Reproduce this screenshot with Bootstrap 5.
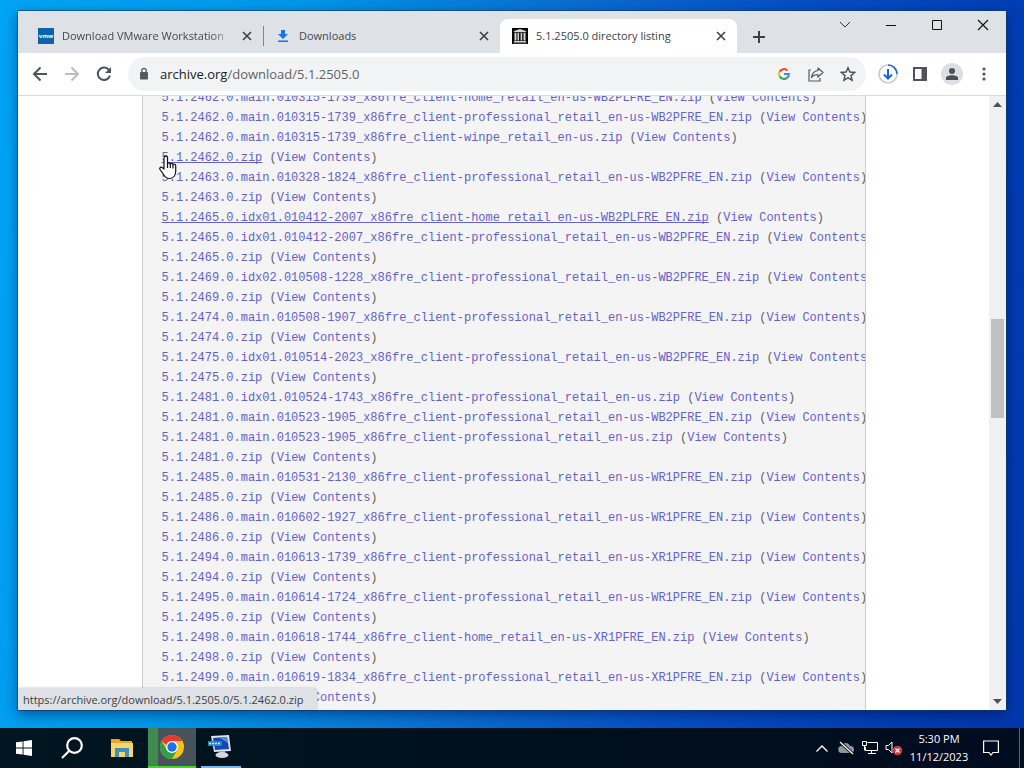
<!DOCTYPE html>
<html lang="en">
<head>
<meta charset="utf-8">
<meta name="viewport" content="width=device-width, initial-scale=1">
<title>5.1.2505.0 directory listing</title>
<link href="https://cdn.jsdelivr.net/npm/bootstrap@5.3.0/dist/css/bootstrap.min.css" rel="stylesheet">
<style>
  body { font-family: "Open Sans", "Noto Sans", sans-serif; font-size: 11px; line-height: 16px; color: #3c4043;
    background: linear-gradient(100deg, #00a4f6 0%, #0098ea 25%, #0a70d2 48%, #0650c4 68%, #003cb2 90%, #0038ac 100%); }
  button { border: 0; background: none; padding: 0; color: inherit; display: flex; align-items: center; justify-content: center; flex: none; }
  svg { display: block; flex: none; }
  .browser { min-height: 0; margin: 11px 18px 18px; background: #fff; box-shadow: 0 0 0 1px rgba(20,60,100,.6), 0 4px 12px rgba(0,10,60,.5); }
  .tabstrip { height: 42px; background: #dee1e6; padding: 8px 0 0 8px; }
  .tab { width: 237px; height: 34px; padding: 0 11px 0 12px; min-width: 0; }
  .tab-split { border-right: 1px solid #80868b; height: 20px; margin-right: -1px; }
  .tab.active { background: #fff; border-radius: 8px 8px 0 0; }
  .tab-title { color: #45494d; white-space: nowrap; overflow: hidden; flex: 1 1 0; margin: 0 10px 0 8px; text-decoration: none; }
  .tab.active .tab-title { color: #3c4043; }
  .fade-end { -webkit-mask-image: linear-gradient(90deg, #000 88%, transparent); mask-image: linear-gradient(90deg, #000 88%, transparent); }
  .round-btn { width: 32px; height: 32px; }
  .win-btn { width: 46px; height: 28px; color: #111; margin-top: -8px; }
  .toolbar { height: 43px; border-bottom: 1px solid #d8dadd; padding: 0 6px; }
  .omnibox { height: 34px; background: #f1f3f4; border-radius: 17px; color: #5f6368; padding: 0 2px 0 8px; margin: 0 6px 0 8px; }
  .address { font-size: 13px; line-height: 20px; color: #5f6368; text-decoration: none; }
  .address b { font-weight: 400; color: #202124; }
  .viewport { min-height: 0; }
  .page { max-width: 724px; background: #f4f4f4; border: solid #ccc; border-width: 0 1px; padding-left: 19px; overflow: hidden; }
  .listing { font: 12px/20px "Liberation Mono", monospace; color: #606060; margin: -8px 0 0; overflow: visible; }
  .listing a { color: #6462c8; text-decoration: none; }
  .listing a:hover, .listing a.lit { text-decoration: underline; text-decoration-skip-ink: none; }
  .scroller { width: 17px; background: #f0f0f0; padding: 6px 2px; color: #505050; }
  .thumb { background: #bfc1c1; flex: 0 0 99px; }
  .status { left: 0; bottom: 0; height: 22px; background: #dee1e6; border-radius: 0 4px 0 0; padding: 4px 14px 2px 5px; color: #3c4043; box-shadow: 0 0 2px rgba(0,0,0,.3); white-space: nowrap; }
  .pointer { left: 141px; top: 59px; }
  .taskbar { height: 40px; background: linear-gradient(90deg, #001621, #000f1c 60%, #000c20); color: #fff; }
  .task { width: 48px; height: 40px; }
  .task.folder { margin: 0 2px; }
  .task.running { border-bottom: 2px solid #49d22d; background: linear-gradient(90deg, #3f8a4c 10px, #46535b 10px); margin-right: 5px; }
  .task.idle { width: 40px; border-bottom: 2px solid #76b9ed; padding-right: 2px; }
  .tray button { width: 24px; height: 40px; }
  .clock { line-height: 18px; width: 66px; margin-right: 7px; }
  .tray .peek { width: 5px; border-left: 1px solid #59636d; margin-left: 16px; }
</style>
</head>
<body class="vh-100 d-flex flex-column overflow-hidden">
<main class="browser flex-grow-1 d-flex flex-column">
  <header class="tabstrip d-flex">
    <div class="tab d-flex align-items-center">
      <svg width="16" height="16"><path fill="#0e63a8" d="M0 0h16v16H0z"/><text x="8" y="10" font-size="6" font-weight="700" font-family="Open Sans" fill="#fff" text-anchor="middle">vmw</text></svg>
      <a class="tab-title fade-end" href="#">Download VMware Workstation</a>
      <button aria-label="Close tab"><svg width="10" height="10" stroke="#3c4043" stroke-width="1.6"><path d="M1 1l8 8M9 1l-8 8"/></svg></button>
    </div>
    <span class="tab-split align-self-center"></span>
    <div class="tab d-flex align-items-center">
      <svg width="16" height="16" fill="#1a73e8"><path d="M6 2h4v4h3L8 11 3 6h3zM3 12.500h10V14H3z"/></svg>
      <a class="tab-title" href="#">Downloads</a>
      <button aria-label="Close tab"><svg width="10" height="10" stroke="#3c4043" stroke-width="1.600"><path d="M1 1l8 8M9 1l-8 8"/></svg></button>
    </div>
    <div class="tab active d-flex align-items-center">
      <svg width="16" height="16"><path d="M0 0h16v16H0z"/><g fill="#d5d5d5"><path d="M8 1l6 2v1.200H2V3zM2 13h12v1H2zM1.500 14.500h13v.8h-13zM2.500 5h2v7.500h-2zM5.500 5h1.600v7.500H5.500zM8.600 5h1.600v7.500H8.600zM11.500 5h2v7.500h-2z"/></g></svg>
      <a class="tab-title" href="#">5.1.2505.0 directory listing</a>
      <button aria-label="Close tab"><svg width="10" height="10" stroke="#3c4043" stroke-width="1.600"><path d="M1 1l8 8M9 1l-8 8"/></svg></button>
    </div>
    <button class="ms-3 mb-auto mt-2" aria-label="New tab"><svg class="mt-1" width="12" height="12" stroke="#3c4043" stroke-width="2"><path d="M6 0v12M0 6h12"/></svg></button>
    <div class="d-flex ms-auto">
      <button class="win-btn" aria-label="Search tabs"><svg width="12" height="8" fill="none" stroke="#333"><path d="M1 1l5 5 5-5"/></svg></button>
      <button class="win-btn" aria-label="Minimize"><svg width="10" height="10" stroke="#111"><path d="M0 5.500h10"/></svg></button>
      <button class="win-btn" aria-label="Maximize"><svg width="10" height="10" fill="none" stroke="#111"><path d="M.5.5h9v9h-9z"/></svg></button>
      <button class="win-btn" aria-label="Close"><svg width="12" height="12" stroke="#111" stroke-width="1.200"><path d="M1 1l10 10M11 1L1 11"/></svg></button>
    </div>
  </header>
  <nav class="toolbar d-flex align-items-center">
    <button class="round-btn" aria-label="Back"><svg width="16" height="16" fill="none" stroke="#50545a" stroke-width="2"><path d="M15 8H2M8.500 1.500L2 8l6.500 6.500"/></svg></button>
    <button class="round-btn" aria-label="Forward"><svg width="16" height="16" fill="none" stroke="#babcbe" stroke-width="2"><path d="M1 8h13M7.500 1.500L14 8l-6.500 6.500"/></svg></button>
    <button class="round-btn" aria-label="Reload"><svg width="16" height="16" fill="none" stroke="#50545a" stroke-width="2"><path d="M13.300 4.500A6.200 6.200 0 1 0 14 9.500"/><path d="M15 1v6H9z" fill="#50545a" stroke="none"/></svg></button>
    <div class="omnibox d-flex align-items-center flex-grow-1">
      <button aria-label="Site information"><svg width="16" height="16" fill="#55595e"><path d="M5 6h6a1 1 0 0 1 1 1v5.500a1 1 0 0 1-1 1H5a1 1 0 0 1-1-1V7a1 1 0 0 1 1-1z"/><path d="M5.800 6V4.500a2.200 2.200 0 0 1 4.400 0V6" fill="none" stroke="#55595e" stroke-width="1.300"/></svg></button>
      <a class="address flex-grow-1 ms-2" href="#"><b>archive.org</b>/download/5.1.2505.0</a>
      <button class="round-btn" aria-label="Search with Google"><svg width="12" height="12" viewBox="0 0 12 12" fill="none" stroke-width="2"><path stroke="#ea4335" d="M1.600 3.800A4.900 4.900 0 0 1 9.500 2.600"/><path stroke="#fbbc05" d="M1.600 8.200a4.900 4.900 0 0 1 0-4.400"/><path stroke="#34a853" d="M1.600 8.200a4.900 4.900 0 0 0 7.400 1.700"/><path stroke="#4285f4" d="M9 9.900A4.900 4.900 0 0 0 10.900 6H6"/></svg></button>
      <button class="round-btn" aria-label="Share"><svg width="16" height="16" fill="none" stroke="#55595e" stroke-width="1.200" stroke-linejoin="round"><path d="M3 4H1v11h11v-3"/><path d="M10 2l5 4.500-5 4.500V8.500C7 8.500 5 9.500 3.500 11.500 4 7.500 6 5 10 4.500z"/></svg></button>
      <button class="round-btn" aria-label="Bookmark"><svg width="16" height="16" fill="none" stroke="#50545a" stroke-width="1.500"><path d="M8 1.800l1.900 4.300 4.700.4L11 9.600l1.100 4.600L8 11.800l-4.100 2.400L5 9.600 1.400 6.500l4.700-.4z"/></svg></button>
    </div>
    <button class="round-btn" aria-label="Download progress"><svg width="20" height="20" fill="none" stroke-width="1.600"><circle cx="10" cy="10" r="9" stroke="#c7cbd0"/><path stroke="#1a66d8" d="M10 1a9 9 0 0 1 9 9"/><path stroke="#1a66d8" stroke-width="2" d="M10 5v9M6 10.500l4 4 4-4"/></svg></button>
    <button class="round-btn" aria-label="Side panel"><svg width="14" height="14"><path d="M1 1h12v12H1z" fill="none" stroke="#50545a" stroke-width="2"/><path d="M8.500 1H13v12H8.500z" fill="#50545a"/></svg></button>
    <button class="round-btn" aria-label="Profile"><svg width="22" height="22"><circle cx="11" cy="11" r="11" fill="#dcdfe5"/><circle cx="11" cy="8" r="3" fill="#4c5056"/><path fill="#4c5056" d="M5 17v-2c0-3.600 12-3.600 12 0v2z"/></svg></button>
    <button class="round-btn" aria-label="Menu"><svg width="4" height="14" fill="#50545a"><circle cx="2" cy="2" r="1.600"/><circle cx="2" cy="7" r="1.600"/><circle cx="2" cy="12" r="1.600"/></svg></button>
  </nav>
  <section class="viewport flex-grow-1 d-flex position-relative">
    <div class="flex-grow-1 d-flex justify-content-center overflow-hidden">
      <div class="page w-100"><pre class="listing" id="listing"></pre></div>
    </div>
    <div class="scroller d-flex flex-column align-items-center">
      <svg width="9" height="5" fill="#505050"><path d="M4.500 0L9 5H0z"/></svg>
      <div style="flex:212 1 0"></div>
      <div class="thumb w-100"></div>
      <div style="flex:281 1 0"></div>
      <svg width="9" height="5" fill="#505050"><path d="M0 0h9L4.500 5z"/></svg>
    </div>
    <div class="status position-absolute">https://archive.org/download/5.1.2505.0/5.1.2462.0.zip</div>
    <svg class="pointer position-absolute" width="18" height="25" viewBox="0 0 18 25" fill="#fff" stroke="#111" stroke-width="1.200" stroke-linejoin="round"><path d="M5 14V3c0-2.400 3.500-2.400 3.500 0v6c0-1.500 2.800-1.500 2.800.4 0-1.500 2.700-1.300 2.700.6 0-1.400 2.700-1.200 2.700.8V16c0 4-2 7.500-6 7.500-3.500 0-5-1.500-6.500-4.500L1 14.500C0 12.500 2.500 11.300 3.700 13z"/><path d="M8.500 9v4M11.300 9.500V13M14 10v3.500" fill="none"/></svg>
  </section>
</main>
<footer class="taskbar d-flex flex-shrink-0">
  <button class="task" aria-label="Start"><svg width="16" height="16" fill="#fff"><path d="M0 2.300L6.600 1.400v6.100H0zM7.500 1.300L16 0v7.500H7.500zM0 8.400h6.600v6.200L0 13.700zM7.500 8.400H16V16l-8.500-1.200z"/></svg></button>
  <button class="task" aria-label="Search"><svg width="22" height="22" fill="none" stroke="#fff" stroke-width="2.200"><circle cx="13.500" cy="8.500" r="7.300"/><path d="M8.300 13.800L1 21"/></svg></button>
  <button class="task folder" aria-label="File Explorer"><svg width="22" height="18"><path fill="#e9a820" d="M0 0h8l2 2h11v4H0z"/><path fill="#fbd568" d="M0 4h22v14H0z"/><path fill="#3d8ec4" d="M4 9h14v9h-4v-5H8v5H4z"/></svg></button>
  <button class="task running" aria-label="Google Chrome"><svg width="24" height="24" viewBox="0 0 24 24"><circle cx="12" cy="12" r="12" fill="#fbc116"/><path fill="#e33b2e" d="M1.600 6A12 12 0 0 1 22.400 6H12v8z"/><path fill="#2da24c" d="M1.600 6A12 12 0 0 0 12 24l5.200-9-5.200 2L6.800 15z"/><circle cx="12" cy="12" r="6" fill="#fff"/><circle cx="12" cy="12" r="4.700" fill="#1a73e8"/></svg></button>
  <button class="task idle" aria-label="Remote computer"><svg width="24" height="24"><path fill="#dbe3ec" d="M3 1l18-1 2 16-17 1z"/><path fill="#1646b4" d="M5 3l14-1 2 12-14 1z"/><path fill="#4f8de0" d="M11 2.600l8-.6 1 6z"/><path fill="#1d85c8" d="M0 6h14v5H0z"/><path stroke="#d7f1ff" stroke-width="1.500" stroke-dasharray="2 1" d="M1 8.500h12"/><path fill="#9daab8" d="M11 16h6v3h-6z"/><ellipse cx="14" cy="20" rx="6.500" ry="3" fill="#d5d9dd"/></svg></button>
  <div class="tray d-flex ms-auto">
    <button aria-label="Show hidden icons"><svg width="12" height="7" fill="none" stroke="#fff" stroke-width="1.400"><path d="M.5 6.500L6 1l5.500 5.500"/></svg></button>
    <button aria-label="OneDrive"><svg width="16" height="14"><path fill="#8e969c" d="M4 12a3.500 3.500 0 0 1-.5-7A4.500 4.500 0 0 1 12 5a3.500 3.500 0 0 1 1 7z"/><path stroke="#001018" stroke-width="3" d="M2 1l13 12"/><path stroke="#fff" stroke-width="1.200" d="M2 1l13 12"/></svg></button>
    <button aria-label="Network"><svg width="17" height="14" fill="none" stroke="#fff"><path d="M5.500 1.500h10v8h-12V6M6 12.500h8M9.500 9.500v3M.5.500h4v4h-4zM2.500 4.500v5"/></svg></button>
    <button aria-label="Volume muted"><svg width="18" height="16"><path d="M1 5.500h2.500L7 2v11L3.500 9.500H1z" fill="none" stroke="#fff"/><circle cx="12.500" cy="10.500" r="4.800" fill="#d13438"/><path stroke="#fff" stroke-width="1.300" d="M10.500 8.500l4 4M14.500 8.500l-4 4"/></svg></button>
    <div class="clock text-center align-self-center">5:30 PM<br>11/12/2023</div>
    <button aria-label="Notifications"><svg width="16" height="16" fill="none" stroke="#fff" stroke-width="1.200"><path d="M.6 1h14.800v11.500H10L8 15l-2-2.500H.6z"/></svg></button>
    <button class="peek" aria-label="Show desktop"></button>
  </div>
</footer>
<script>
  // One entry per archive; a leading * marks an underlined row.
  const pro = "_x86fre_client-professional_retail_en-us", home = "_x86fre_client-home_retail_en-us";
  const files = [
    "2462.0.main.010315-1739" + home + "-WB2PLFRE_EN", "2462.0.main.010315-1739" + pro + "-WB2PFRE_EN",
    "2462.0.main.010315-1739_x86fre_client-winpe_retail_en-us", "*2462.0",
    "2463.0.main.010328-1824" + pro + "-WB2PFRE_EN", "2463.0",
    "*2465.0.idx01.010412-2007" + home + "-WB2PLFRE_EN", "2465.0.idx01.010412-2007" + pro + "-WB2PFRE_EN", "2465.0",
    "2469.0.idx02.010508-1228" + pro + "-WB2PFRE_EN", "2469.0",
    "2474.0.main.010508-1907" + pro + "-WB2PFRE_EN", "2474.0",
    "2475.0.idx01.010514-2023" + pro + "-WB2PFRE_EN", "2475.0",
    "2481.0.idx01.010524-1743" + pro, "2481.0.main.010523-1905" + pro + "-WB2PFRE_EN",
    "2481.0.main.010523-1905" + pro, "2481.0",
    "2485.0.main.010531-2130" + pro + "-WR1PFRE_EN", "2485.0",
    "2486.0.main.010602-1927" + pro + "-WR1PFRE_EN", "2486.0",
    "2494.0.main.010613-1739" + pro + "-XR1PFRE_EN", "2494.0",
    "2495.0.main.010614-1724" + pro + "-WR1PFRE_EN", "2495.0",
    "2498.0.main.010618-1744" + home + "-XR1PFRE_EN", "2498.0",
    "2499.0.main.010619-1834" + pro + "-XR1PFRE_EN", "2499.0"
  ];
  document.getElementById("listing").innerHTML = files.map(f =>
    `<a href="#"${f[0] === "*" ? ' class="lit"' : ""}>5.1.${f.replace("*", "")}.zip</a> (<a href="#">View Contents</a>)`).join("\n");
</script>
<script src="https://cdn.jsdelivr.net/npm/bootstrap@5.3.0/dist/js/bootstrap.bundle.min.js"></script>
</body>
</html>
